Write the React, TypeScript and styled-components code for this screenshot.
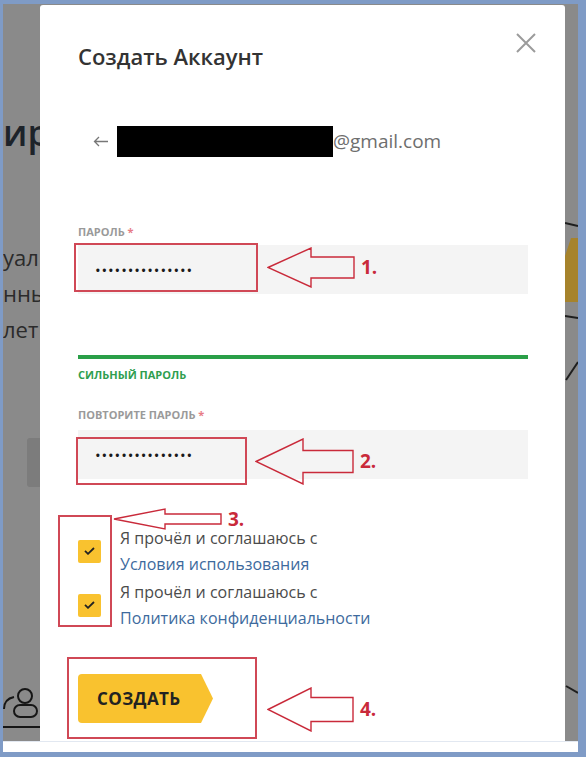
import React from 'react';
import styled, { createGlobalStyle } from 'styled-components';

const RED = '#c92a3a';
const YELLOW = '#f9c22f';

const GlobalStyle = createGlobalStyle`
  html, body { margin: 0; padding: 0; background: #fff; }
  body { font-family: 'Open Sans', 'Noto Sans', sans-serif; }
  * { box-sizing: border-box; }
`;

const Frame = styled.div`
  width: 586px;
  height: 757px;
  border-style: solid;
  border-color: #7f9bc6;
  border-width: 4px 8px 5px 3px;
  display: flex;
  flex-direction: column;
`;

const Backdrop = styled.div`
  height: 737px;
  flex-shrink: 0;
  background: #8a8a8a;
  display: flex;
  overflow: hidden;
`;

const BottomStrip = styled.div`
  flex: 1;
  background: #fff;
  border-top: 1px solid #e2e8f1;
`;

/* dimmed page behind the dialog */
const PageLeft = styled.div`
  width: 37px;
  flex-shrink: 0;
  overflow: hidden;
  display: flex;
  flex-direction: column;
  color: #1d232a;
`;

const Heading = styled.div`
  margin-top: 107px;
  font-size: 36px;
  line-height: 44px;
  font-weight: 600;
  white-space: nowrap;
`;

const Lines = styled.div`
  margin-top: 84px;
  font-size: 22px;
  line-height: 36px;
  color: #2b2b2b;
  white-space: nowrap;
`;

const GhostButton = styled.div`
  flex-shrink: 0;
  margin: 91px 0 0 24px;
  height: 49px;
  background: #7c7c7c;
  border-radius: 3px 0 0 3px;
`;

const UserIcon = styled.svg`
  flex-shrink: 0;
  margin-top: 199px;
`;

const PageRight = styled.div`
  width: 13px;
  flex-shrink: 0;
`;

/* dialog */
const Modal = styled.div`
  width: 525px;
  flex-shrink: 0;
  margin-top: 1px;
  background: #fff;
  border-radius: 3px 3px 0 0;
  padding: 36px 37px 0 38px;
  display: flex;
  flex-direction: column;
`;

const Header = styled.div`
  display: flex;
  justify-content: space-between;
  align-items: flex-start;
`;

const Title = styled.h2`
  margin: 0;
  font-size: 22px;
  line-height: 30px;
  font-weight: 600;
  color: #333;
`;

const CloseButton = styled.button`
  width: 20px;
  height: 20px;
  margin: -8px -8px 0 0;
  padding: 0;
  border: 0;
  background: none;
  display: flex;
`;

const EmailRow = styled.div`
  margin-top: 55px;
  height: 31px;
  padding-left: 15px;
  display: flex;
  align-items: center;
`;

const Redacted = styled.span`
  width: 216px;
  height: 31px;
  margin-left: 8px;
  background: #000;
`;

const Email = styled.span`
  font-size: 19px;
  line-height: 31px;
  color: #6e6e6e;
`;

const Label = styled.div<{ $gap: number }>`
  margin-top: ${(p) => p.$gap}px;
  font-size: 11px;
  line-height: 14px;
  font-weight: 700;
  color: #9a9a9a;
  text-transform: uppercase;
`;

const Required = styled.span`
  color: #e77c86;
`;

const Marked = styled.div<{ $gap: number }>`
  position: relative;
  margin-top: ${(p) => p.$gap}px;
`;

const Field = styled.div`
  height: 49px;
  background: #f4f4f4;
  padding-left: 17px;
  display: flex;
  align-items: center;
  font-size: 15px;
  letter-spacing: 0.9px;
  color: #1a1a1a;
`;

const Strength = styled.div`
  margin-top: 61px;
  height: 4px;
  background: #2a9f48;
`;

const StrengthText = styled.div`
  margin-top: 9px;
  font-size: 11px;
  line-height: 14px;
  font-weight: 700;
  color: #2f9e4f;
`;

const Agreements = styled.div`
  display: flex;
  flex-direction: column;
  gap: 2px;
`;

const AgreeRow = styled.label`
  display: flex;
  align-items: center;
  gap: 19px;
`;

const Check = styled.span`
  width: 23px;
  height: 23px;
  flex-shrink: 0;
  border-radius: 2px;
  background: ${YELLOW};
  display: flex;
  align-items: center;
  justify-content: center;
`;

const AgreeText = styled.span`
  font-size: 16px;
  line-height: 26px;
  color: #4b4b4b;
`;

const AgreeLink = styled.a`
  color: #3d6a9d;
  text-decoration: none;
`;

const CreateButton = styled.button`
  position: relative;
  display: block;
  width: 123px;
  height: 49px;
  padding: 0 0 0 19px;
  border: 0;
  border-radius: 4px 0 0 4px;
  background: ${YELLOW};
  text-align: left;
  font-family: 'Open Sans', sans-serif;
  font-size: 17px;
  line-height: 49px;
  font-weight: 700;
  letter-spacing: 0.4px;
  color: #222;

  &::after {
    content: '';
    position: absolute;
    left: 100%;
    top: 0;
    width: 12px;
    height: 100%;
    background: ${YELLOW};
    clip-path: polygon(0 0, 100% 50%, 0 100%);
  }
`;

/* red annotations laid over the dialog */
const Highlight = styled.div<{ $l: number; $t: number; $w: number; $h: number }>`
  position: absolute;
  left: ${(p) => p.$l}px;
  top: ${(p) => p.$t}px;
  width: ${(p) => p.$w}px;
  height: ${(p) => p.$h}px;
  border: 2px solid #d04856;
  pointer-events: none;
`;

const Callout = styled.div<{ $l: number; $t: number }>`
  position: absolute;
  left: ${(p) => p.$l}px;
  top: ${(p) => p.$t}px;
  display: flex;
  align-items: center;
  gap: 6px;
  pointer-events: none;
`;

const CalloutNumber = styled.span`
  font-size: 19px;
  line-height: 1;
  font-weight: 700;
  color: ${RED};
`;

type ArrowProps = { w: number; h: number; head: number; body: number; n: string; l: number; t: number };

const ArrowCallout = ({ w, h, head, body, n, l, t }: ArrowProps) => {
  const top = (h - body) / 2;
  const pts = `1,${h / 2} ${head},1 ${head},${top} ${w - 1},${top} ${w - 1},${top + body} ${head},${top + body} ${head},${h - 1}`;
  return (
    <Callout $l={l} $t={t}>
      <svg width={w} height={h} viewBox={`0 0 ${w} ${h}`}>
        <polygon points={pts} fill="none" stroke={RED} strokeWidth="1.4" />
      </svg>
      <CalloutNumber>{n}</CalloutNumber>
    </Callout>
  );
};

const CheckMark = () => (
  <svg width="11" height="8" viewBox="0 0 11 8">
    <path d="M1 3.8 L4 6.8 L10 1" fill="none" stroke="#222" strokeWidth="1.8" />
  </svg>
);

const dots = '•••••••••••••••';

export default function App() {
  return (
    <>
      <GlobalStyle />
      <Frame>
        <Backdrop>
          <PageLeft>
            <Heading>ир</Heading>
            <Lines>
              уал
              <br />
              нны
              <br />
              лет
            </Lines>
            <GhostButton />
            <UserIcon width="37" height="45" viewBox="0 0 37 45">
              <path d="M1 23 Q1 13 11 11" fill="none" stroke="#161616" strokeWidth="2" />
              <circle cx="22" cy="10" r="7" fill="none" stroke="#161616" strokeWidth="2" />
              <rect x="11" y="19" width="23" height="12" rx="6" fill="none" stroke="#161616" strokeWidth="2" />
              <line x1="0" y1="41" x2="37" y2="41" stroke="#161616" strokeWidth="2" />
            </UserIcon>
          </PageLeft>

          <Modal>
            <Header>
              <Title>Создать Аккаунт</Title>
              <CloseButton aria-label="Закрыть">
                <svg width="20" height="20" viewBox="0 0 20 20">
                  <path d="M1 1 L19 19 M19 1 L1 19" stroke="#9b9b9b" strokeWidth="2" />
                </svg>
              </CloseButton>
            </Header>

            <EmailRow>
              <svg width="16" height="11" viewBox="0 0 16 11">
                <path d="M15 5.5 H1.5 M6 1 L1.5 5.5 L6 10" fill="none" stroke="#777" strokeWidth="1.3" />
              </svg>
              <Redacted />
              <Email>@gmail.com</Email>
            </EmailRow>

            <Label $gap={68}>
              Пароль <Required>*</Required>
            </Label>
            <Marked $gap={6}>
              <Field>{dots}</Field>
              <Highlight $l={-4} $t={-2} $w={184} $h={49} />
              <ArrowCallout l={189} t={2} w={88} h={41} head={44} body={21} n="1." />
            </Marked>

            <Strength />
            <StrengthText>СИЛЬНЫЙ ПАРОЛЬ</StrengthText>

            <Label $gap={26}>
              Повторите пароль <Required>*</Required>
            </Label>
            <Marked $gap={8}>
              <Field>{dots}</Field>
              <Highlight $l={-2} $t={7} $w={171} $h={48} />
              <ArrowCallout l={177} t={8} w={99} h={47} head={48} body={22} n="2." />
            </Marked>

            <Marked $gap={46}>
              <Agreements>
                <AgreeRow>
                  <Check>
                    <CheckMark />
                  </Check>
                  <AgreeText>
                    Я прочёл и соглашаюсь с
                    <br />
                    <AgreeLink href="#">Условия использования</AgreeLink>
                  </AgreeText>
                </AgreeRow>
                <AgreeRow>
                  <Check>
                    <CheckMark />
                  </Check>
                  <AgreeText>
                    Я прочёл и соглашаюсь с
                    <br />
                    <AgreeLink href="#">Политика конфиденциальности</AgreeLink>
                  </AgreeText>
                </AgreeRow>
              </Agreements>
              <Highlight $l={-20} $t={-10} $w={54} $h={112} />
              <ArrowCallout l={35} t={-17} w={109} h={22} head={52} body={10} n="3." />
            </Marked>

            <Marked $gap={43}>
              <CreateButton>СОЗДАТЬ</CreateButton>
              <Highlight $l={-11} $t={-17} $w={190} $h={82} />
              <ArrowCallout l={189} t={13} w={87} h={45} head={44} body={24} n="4." />
            </Marked>
          </Modal>

          <PageRight>
            <svg width="13" height="737" viewBox="0 0 13 737">
              <line x1="0" y1="219" x2="13" y2="222" stroke="#1e1e1e" strokeWidth="2" />
              <polygon points="6,234 13,234 13,298 0,298 0,252" fill="#a6832c" />
              <line x1="0" y1="312" x2="13" y2="314" stroke="#1e1e1e" strokeWidth="2" />
              <line x1="1" y1="376" x2="13" y2="358" stroke="#1e1e1e" strokeWidth="2" />
              <line x1="1" y1="682" x2="13" y2="689" stroke="#1e1e1e" strokeWidth="2" />
            </svg>
          </PageRight>
        </Backdrop>
        <BottomStrip />
      </Frame>
    </>
  );
}
